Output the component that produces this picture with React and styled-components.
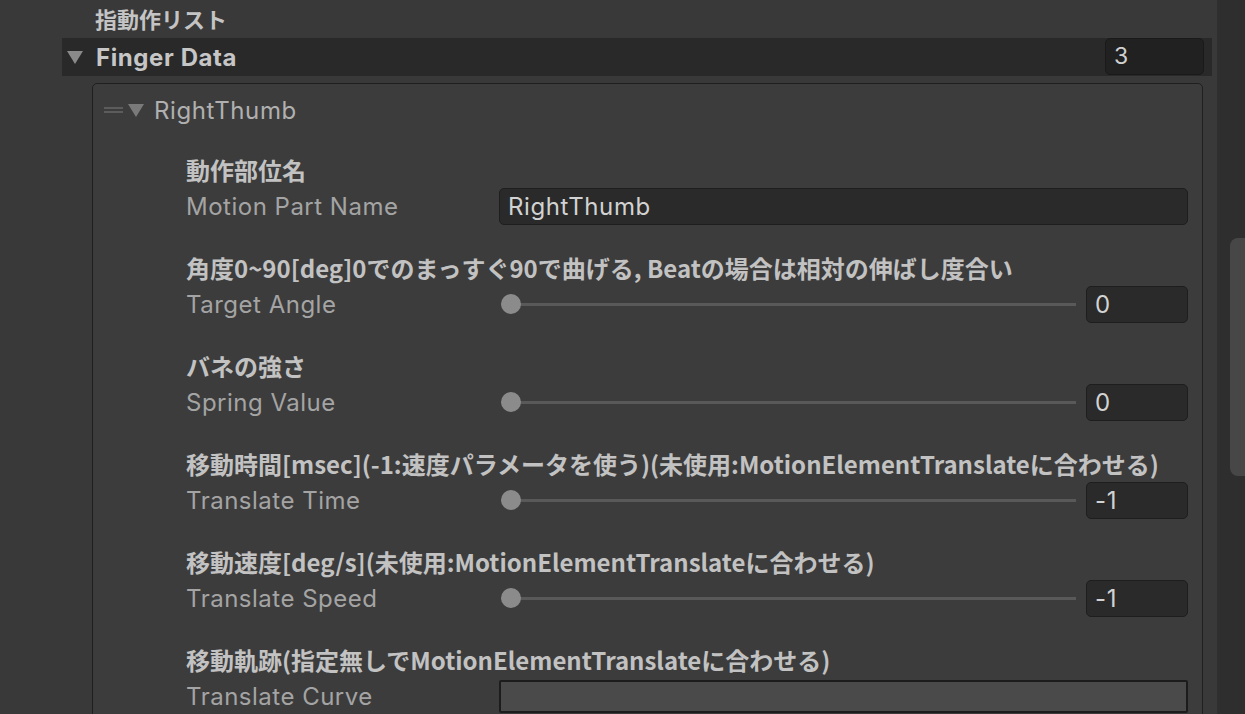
import React from 'react';
import styled, { createGlobalStyle } from 'styled-components';

const GlobalStyle = createGlobalStyle`
  html, body {
    margin: 0;
    padding: 0;
    background: #383838;
    overflow: hidden;
  }
  body {
    font-family: Inter, "Noto Sans", "Noto Sans CJK JP", sans-serif;
  }
`;

const fields = [
  { jp: '動作部位名', label: 'Motion Part Name', kind: 'text', value: 'RightThumb' },
  { jp: '角度0~90[deg]0でのまっすぐ90で曲げる, Beatの場合は相対の伸ばし度合い', label: 'Target Angle', kind: 'slider', value: '0' },
  { jp: 'バネの強さ', label: 'Spring Value', kind: 'slider', value: '0' },
  { jp: '移動時間[msec](-1:速度パラメータを使う)(未使用:MotionElementTranslateに合わせる)', label: 'Translate Time', kind: 'slider', value: '-1' },
  { jp: '移動速度[deg/s](未使用:MotionElementTranslateに合わせる)', label: 'Translate Speed', kind: 'slider', value: '-1' },
  { jp: '移動軌跡(指定無しでMotionElementTranslateに合わせる)', label: 'Translate Curve', kind: 'curve' },
];

const Triangle = ({ color = '#8a8a8a' }) => (
  <svg width="16" height="13" viewBox="0 0 16 13">
    <path d="M0 0 H16 L8 13 Z" fill={color} />
  </svg>
);

const Handle = () => (
  <svg width="19" height="8" viewBox="0 0 19 8">
    <rect x="0" y="1" width="19" height="2" fill="#5c5c5c" />
    <rect x="0" y="5" width="19" height="2" fill="#5c5c5c" />
  </svg>
);

export default function App() {
  return (
    <Page>
      <GlobalStyle />
      <Content>
        <Title>指動作リスト</Title>
        <ArrayRow>
          <Fold><Triangle /></Fold>
          <ArrayName>Finger Data</ArrayName>
          <CountField>3</CountField>
        </ArrayRow>
        <ElementBox>
          <ElementHeader>
            <Handle />
            <Triangle color="#7a7a7a" />
            <ElementName>RightThumb</ElementName>
          </ElementHeader>
          <Fields>
            {fields.map(f => (
              <Group key={f.label}>
                <Tooltip>{f.jp}</Tooltip>
                <FieldRow>
                  <Label>{f.label}</Label>
                  {f.kind === 'text' && <TextField>{f.value}</TextField>}
                  {f.kind === 'slider' && (
                    <SliderWrap>
                      <Track>
                        <Thumb />
                      </Track>
                      <NumberField>{f.value}</NumberField>
                    </SliderWrap>
                  )}
                  {f.kind === 'curve' && <CurveField />}
                </FieldRow>
              </Group>
            ))}
          </Fields>
        </ElementBox>
      </Content>
      <ScrollTrack>
        <ScrollThumb />
      </ScrollTrack>
    </Page>
  );
}

const Page = styled.div`
  display: flex;
  width: 1245px;
  height: 714px;
  overflow: hidden;
  background: #383838;
`;

const Content = styled.div`
  flex: 1;
  padding: 0 5px 0 62px;
  border-right: 1px solid #2f2f2f;
  background: #393939;
`;

const Title = styled.div`
  height: 38px;
  line-height: 36px;
  padding-left: 33px;
  font-family: "Noto Sans CJK JP", sans-serif;
  font-weight: 700;
  font-size: 22px;
  color: #c4c4c4;
`;

const ArrayRow = styled.div`
  display: flex;
  align-items: center;
  height: 38px;
  background: #292929;
  padding-right: 8px;
`;

const Fold = styled.div`
  display: flex;
  align-items: center;
  width: 34px;
  padding-left: 5px;
  box-sizing: border-box;
`;

const ArrayName = styled.div`
  flex: 1;
  font-weight: 700;
  font-size: 24px;
  letter-spacing: 0.6px;
  color: #c6c6c6;
`;

const CountField = styled.div`
  width: 99px;
  height: 37px;
  box-sizing: border-box;
  align-self: flex-start;
  background: #212121;
  border: 1px solid #1a1a1a;
  border-radius: 5px;
  padding-left: 8px;
  line-height: 35px;
  font-size: 23px;
  color: #d0d0d0;
`;

const ElementBox = styled.div`
  margin: 7px 9px 0 30px;
  border: 1px solid #1f1f1f;
  border-radius: 5px;
  background: #3c3c3c;
  height: 700px;
`;

const ElementHeader = styled.div`
  display: flex;
  align-items: center;
  gap: 5px;
  height: 52px;
  padding-left: 11px;
`;

const ElementName = styled.div`
  margin-left: 5px;
  font-size: 24px;
  letter-spacing: 0.6px;
  color: #b0b0b0;
`;

const Fields = styled.div`
  padding: 15px 14px 0 93px;
  display: flex;
  flex-direction: column;
  gap: 24px;
`;

const Group = styled.div`
  display: flex;
  flex-direction: column;
`;

const Tooltip = styled.div`
  height: 37px;
  line-height: 37px;
  font-family: "Noto Sans CJK JP", sans-serif;
  font-weight: 700;
  font-size: 24px;
  color: #c2c2c2;
  white-space: nowrap;
`;

const FieldRow = styled.div`
  display: flex;
  align-items: center;
  height: 37px;
`;

const Label = styled.div`
  width: 313px;
  font-size: 24px;
  letter-spacing: 0.5px;
  color: #a4a4a4;
  white-space: nowrap;
`;

const TextField = styled.div`
  flex: 1;
  height: 37px;
  box-sizing: border-box;
  background: #2a2a2a;
  border: 1px solid #1e1e1e;
  border-radius: 5px;
  padding-left: 8px;
  line-height: 35px;
  font-size: 24px;
  letter-spacing: 0.6px;
  color: #d2d2d2;
`;

const SliderWrap = styled.div`
  flex: 1;
  display: flex;
  align-items: center;
  gap: 10px;
`;

const Track = styled.div`
  position: relative;
  flex: 1;
  height: 3px;
  margin-left: 2px;
  background: #595959;
`;

const Thumb = styled.div`
  position: absolute;
  left: 0;
  top: -9px;
  width: 20px;
  height: 20px;
  border-radius: 50%;
  background: #8b8b8b;
`;

const NumberField = styled(TextField)`
  flex: none;
  width: 102px;
`;

const CurveField = styled.div`
  flex: 1;
  height: 33px;
  box-sizing: border-box;
  margin-top: 0;
  background: #4a4a4a;
  border: 2px solid #1c1c1c;
  border-radius: 2px;
`;

const ScrollTrack = styled.div`
  width: 27px;
  background: #2e2e2e;
  padding: 238px 0 0 12px;
  box-sizing: border-box;
`;

const ScrollThumb = styled.div`
  width: 15px;
  height: 238px;
  border-radius: 8px 0 0 8px;
  background: #474747;
`;
